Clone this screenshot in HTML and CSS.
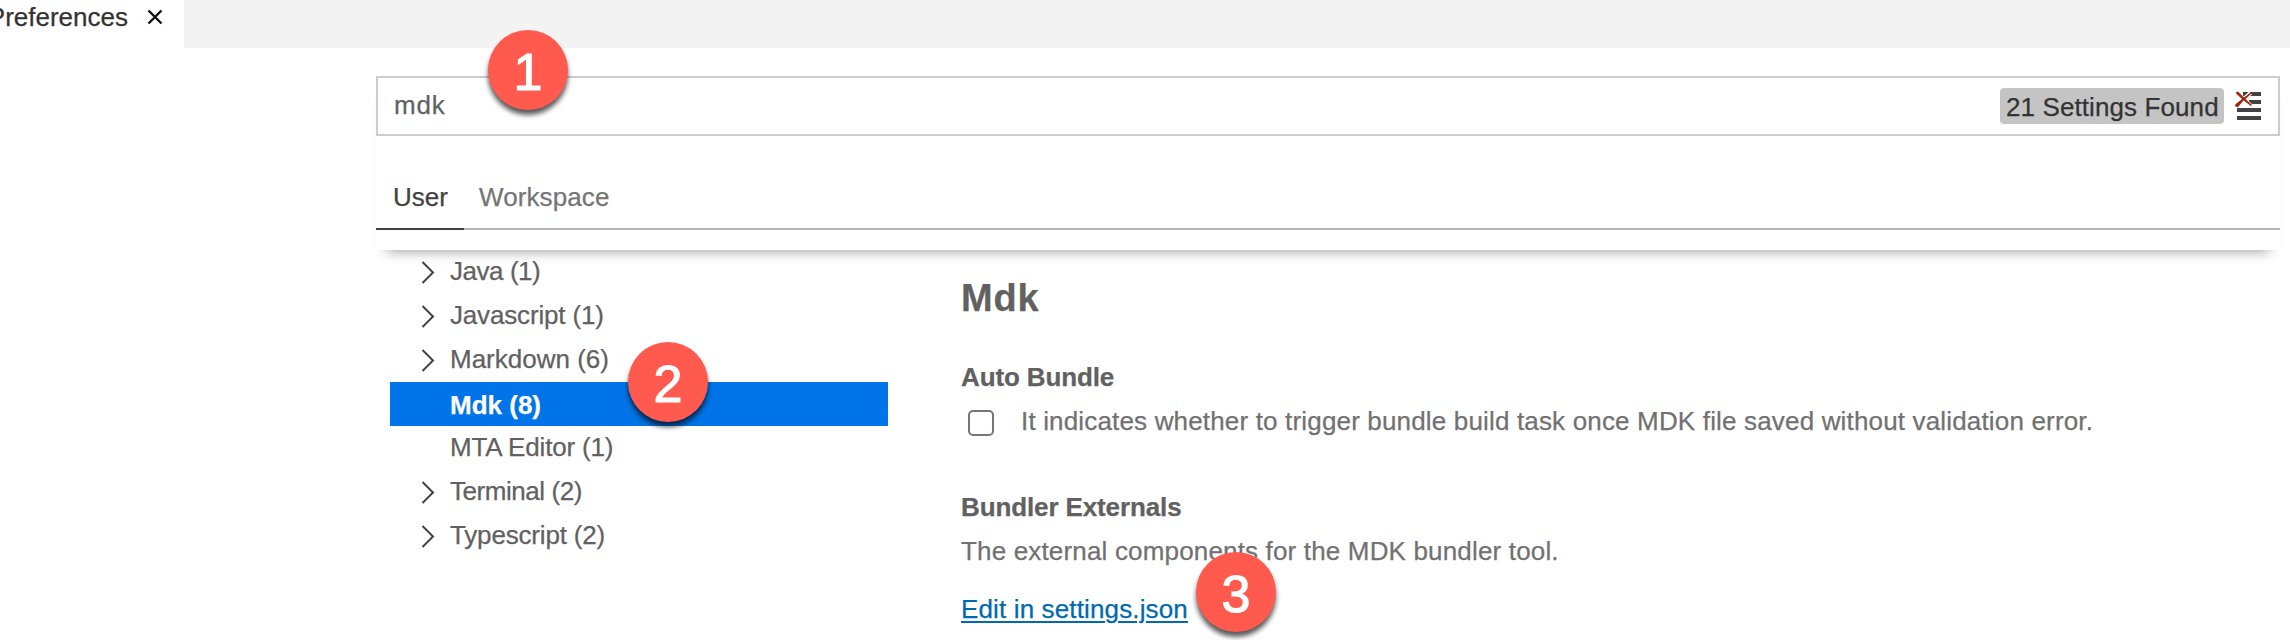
FILE: index.html
```
<!DOCTYPE html>
<html lang="en">
<head>
<meta charset="utf-8">
<title>Preferences</title>
<link rel="stylesheet" href="styles.css">
</head>
<body>
<div class="tabbar">
  <div class="tab">
    <span class="tab-label">Preferences</span>
    <svg class="close" width="16" height="16" viewBox="0 0 16 16"><path d="M1.500 1.500L14.500 14.500M14.500 1.500L1.500 14.500"/></svg>
  </div>
</div>
<main class="editor">
  <header class="header">
    <div class="search">
      <span class="query">mdk</span>
      <span class="count"><span class="count-text">21 Settings Found</span></span>
      <svg class="clear" width="28" height="30" viewBox="0 0 28 30">
        <path class="bars" d="M8 1H26V5H8zM14 9H26V13H14zM2 17H26V21H2zM2 25H26V29H2z"/>
        <path class="halo" d="M2 2L16 15M15.500 2L2 14"/>
        <path class="cross" d="M1 1.500Q2 0 3.500 1L9 6.500L15.500 1.500L16.500 2.500L10.500 8L17 14L16 15L8.500 9.500L3.500 15.500Q1 17 0 14.500Q0 13 2 12L7 8L1.500 3z"/>
      </svg>
    </div>
    <nav class="scopes">
      <span class="scope active">User</span>
      <span class="scope workspace">Workspace</span>
    </nav>
  </header>
  <div class="columns">
    <ul class="tree">
      <li class="row"><svg class="chev" width="14" height="24" viewBox="0 0 14 24"><path d="M1.500 2L12 12.500L1.500 23"/></svg><span class="tight">Java (1)</span></li>
      <li class="row"><svg class="chev" width="14" height="24" viewBox="0 0 14 24"><path d="M1.500 2L12 12.500L1.500 23"/></svg><span class="snug">Javascript (1)</span></li>
      <li class="row"><svg class="chev" width="14" height="24" viewBox="0 0 14 24"><path d="M1.500 2L12 12.500L1.500 23"/></svg><span>Markdown (6)</span></li>
      <li class="row leaf selected"><span>Mdk (8)</span></li>
      <li class="row leaf"><span class="snug">MTA Editor (1)</span></li>
      <li class="row"><svg class="chev" width="14" height="24" viewBox="0 0 14 24"><path d="M1.500 2L12 12.500L1.500 23"/></svg><span class="tight">Terminal (2)</span></li>
      <li class="row"><svg class="chev" width="14" height="24" viewBox="0 0 14 24"><path d="M1.500 2L12 12.500L1.500 23"/></svg><span class="snug">Typescript (2)</span></li>
    </ul>
    <section class="settings">
      <h1 class="group">Mdk</h1>
      <h2 class="name auto">Auto Bundle</h2>
      <div class="option"><span class="checkbox"></span><span class="desc">It indicates whether to trigger bundle build task once MDK file saved without validation error.</span></div>
      <h2 class="name externals">Bundler Externals</h2>
      <p class="desc ext-desc">The external components for the MDK bundler tool.</p>
      <a class="link">Edit in settings.json</a>
    </section>
  </div>
</main>
<div class="marker one">1</div>
<div class="marker two">2</div>
<div class="marker three">3</div>
</body>
</html>
```
FILE: styles.css
```
* { box-sizing: border-box; }
body {
  margin: 0;
  width: 2290px;
  height: 640px;
  position: relative;
  overflow: hidden;
  background: #fff;
  color: #616161;
  font: 26px/44px "Liberation Sans", Arial, sans-serif;
  white-space: nowrap;
  -webkit-text-stroke: .25px;
}
.tabbar { height: 48px; background: #f3f3f3; display: flex; }
.tab {
  width: 184px;
  background: #fff;
  color: #333;
  display: flex;
  justify-content: flex-end;
  padding-right: 21px;
  gap: 19px;
}
.tab-label { line-height: 35px; }
.close { margin-top: 9px; flex: none; }
.close path { stroke: #111; stroke-width: 2.4; fill: none; }
.editor { padding: 28px 10px 0 376px; }
.header { height: 174px; background: #fff; box-shadow: 0 12px 12px -11px #999; }
.search {
  height: 60px;
  border: 2px solid #ccc;
  display: flex;
  align-items: center;
  padding: 0 15px 0 16px;
}
.query { flex: 1; line-height: 56px; padding-bottom: 2px; letter-spacing: .8px; }
.count {
  width: 224px;
  height: 36px;
  margin-right: 11px;
  padding-left: 6px;
  border-radius: 4px;
  background: #c4c4c4;
  color: #333;
  line-height: 38px;
  letter-spacing: .1px;
}
.clear { flex: none; }
.bars { fill: #424242; }
.halo { stroke: #fff; stroke-width: 4; }
.cross { fill: #a1260d; }
.scopes {
  height: 66px;
  margin-top: 28px;
  border-bottom: 2px solid #b5b5b5;
  display: flex;
  color: #757575;
}
.scope { height: 66px; line-height: 66px; }
.active { width: 88px; padding-left: 17px; color: #424242; border-bottom: 2px solid #424242; }
.workspace { padding-left: 15px; letter-spacing: .1px; }
.columns { display: flex; }
.tree { list-style: none; margin: 0 0 0 14px; padding: 0; width: 498px; }
.row { height: 44px; padding-left: 31px; display: flex; align-items: flex-start; gap: 15px; line-height: 42px; }
.leaf { padding-left: 60px; }
.selected { background: #0074e8; color: #fff; font-weight: bold; line-height: 46px; }
.tight { letter-spacing: -.45px; }
.snug { letter-spacing: -.17px; }
.chev { margin-top: 10px; flex: none; }
.chev path { fill: none; stroke: #424242; stroke-width: 2; }
.settings { padding: 24px 0 0 73px; }
h1, h2, p { margin: 0; }
.group { font-size: 38px; line-height: 48px; letter-spacing: .8px; }
.name { font-size: 26px; line-height: 44px; letter-spacing: -.12px; }
.auto { margin-top: 33px; }
.option { display: flex; height: 44px; padding-left: 7px; color: #717171; }
.desc { letter-spacing: .165px; }
.checkbox { width: 26px; height: 26px; margin: 11px 27px 0 0; border: 2px solid #767676; border-radius: 5px; }
.externals { margin-top: 42px; }
.ext-desc { color: #717171; }
.link { display: block; width: max-content; margin-top: 14px; letter-spacing: .14px; color: #006ab1; text-decoration: underline; text-decoration-thickness: 2px; text-underline-offset: 3px; text-decoration-skip-ink: auto; }
.marker {
  position: absolute;
  width: 80px;
  height: 80px;
  border-radius: 50%;
  background: #ff5a4d;
  color: #fff;
  font-size: 52px;
  line-height: 84px;
  text-align: center;
  -webkit-text-stroke: 1.2px #fff;
  box-shadow: 0 5px 5px rgba(0, 0, 0, .65);
}
.one { left: 488px; top: 30px; }
.two { left: 628px; top: 342px; }
.three { left: 1196px; top: 552px; }
```
